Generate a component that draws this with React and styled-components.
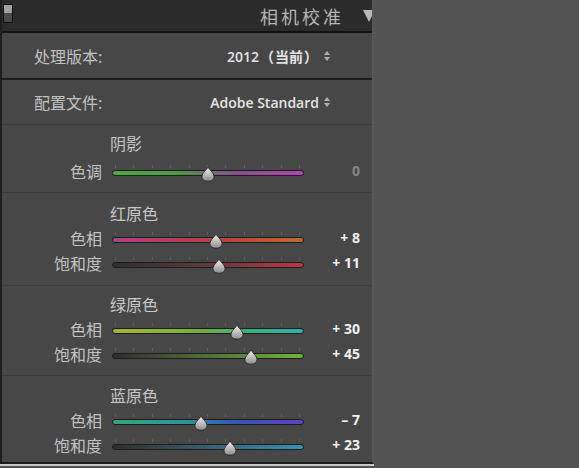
import React from 'react';
import styled, { createGlobalStyle } from 'styled-components';

const GlobalStyle = createGlobalStyle`
  html, body {
    margin: 0;
    padding: 0;
    background: #535353;
  }
  body {
    font-family: "Open Sans", "Noto Sans CJK SC", sans-serif;
  }
`;

const Page = styled.div`
  display: flex;
  height: 468px;
  width: 579px;
  overflow: hidden;
`;

const Panel = styled.div`
  width: 370px;
  height: 462px;
  background: #474747;
  border-left: 2px solid #1e1e1e;
  border-right: 2px solid #585858;
  border-bottom: 2px solid #1a1a1a;
  box-shadow: 0 2px 0 #c9c9c9;
  display: flex;
  flex-direction: column;
`;

const Filler = styled.div`
  flex: 1;
  background: #535353;
`;

const Header = styled.div`
  height: 31px;
  background: #2b2b2b;
  border-bottom: 2px solid #121212;
  display: flex;
  align-items: center;
  overflow: hidden;
  position: relative;
`;

const Switch = styled.div`
  width: 8px;
  height: 17px;
  margin-left: 1px;
  margin-top: -4px;
  border: 1px solid #111;
  background: linear-gradient(#a0a0a0 0 50%, #4a4a4a 50% 100%);
`;

const Title = styled.div`
  margin-left: auto;
  margin-right: 28px;
  font-family: "Noto Sans CJK SC", sans-serif;
  font-size: 18px;
  letter-spacing: 3px;
  color: #b4b4b4;
`;

const Caret = styled.div`
  position: absolute;
  right: -3px;
  top: 10px;
  width: 0;
  height: 0;
  border-left: 6px solid transparent;
  border-right: 6px solid transparent;
  border-top: 12px solid #b8b8b8;
`;

const InfoRow = styled.div`
  height: ${(p) => p.h}px;
  display: flex;
  align-items: center;
  padding: 0 42px 0 32px;
  border-bottom: ${(p) => p.line};
`;

const InfoLabel = styled.div`
  font-family: "Noto Sans CJK SC", sans-serif;
  font-size: 16px;
  color: #c2c2c2;
`;

const InfoValue = styled.div`
  margin-left: auto;
  display: flex;
  align-items: center;
  gap: 5px;
  font-family: "Open Sans", "Noto Sans CJK SC", sans-serif;
  font-weight: 600;
  font-size: 14px;
  color: #e4e4e4;
`;

const Paren = styled.span`
  margin: 0 1px;
`;

const Stepper = styled.span`
  display: flex;
  flex-direction: column;
  gap: 2px;
  &::before,
  &::after {
    content: '';
    width: 0;
    height: 0;
    border-left: 3px solid transparent;
    border-right: 3px solid transparent;
  }
  &::before {
    border-bottom: 4px solid #b0b0b0;
  }
  &::after {
    border-top: 4px solid #b0b0b0;
  }
`;

const Section = styled.div`
  padding: ${(p) => p.pad};
  border-bottom: ${(p) => (p.last ? 'none' : '1px solid #3c3c3c')};
`;

const Heading = styled.div`
  height: 24px;
  line-height: 24px;
  padding-left: 108px;
  font-family: "Noto Sans CJK SC", sans-serif;
  font-size: 16px;
  color: #c8c8c8;
`;

const Row = styled.div`
  height: 25px;
  display: grid;
  grid-template-columns: 100px 202px 56px;
  align-items: center;
`;

const Label = styled.div`
  text-align: right;
  font-family: "Noto Sans CJK SC", sans-serif;
  font-size: 16px;
  color: #c2c2c2;
`;

const TrackWrap = styled.div`
  position: relative;
  margin-left: 10px;
  height: 12px;
  display: flex;
  align-items: center;

  &::before {
    content: '';
    position: absolute;
    left: 3px;
    right: 3px;
    top: 0;
    height: 3px;
    background: repeating-linear-gradient(
      90deg,
      #5e5e5e 0 1px,
      transparent 1px 18.4px
    );
  }
`;

const Track = styled.div`
  width: 100%;
  height: 4px;
  border-radius: 3px;
  border: 1px solid #1c1c1c;
  background: ${(p) => p.bg};
  margin-top: 5px;
`;

const Thumb = styled.svg`
  position: absolute;
  top: 1px;
  width: 14px;
  height: 16px;
  transform: translateX(-7px);
`;

const Value = styled.div`
  text-align: right;
  font-family: "Open Sans", sans-serif;
  font-weight: 700;
  font-size: 14px;
  color: ${(p) => (p.dim ? '#858585' : '#f0f0f0')};
`;

function Slider({ label, value, bg }) {
  const pct = ((value + 100) / 200) * 100;
  const text =
    value === 0 ? '0' : value > 0 ? `+ ${value}` : `– ${Math.abs(value)}`;
  return (
    <Row>
      <Label>{label}</Label>
      <TrackWrap>
        <Track bg={bg} />
        <Thumb viewBox="0 0 14 16" style={{ left: `${pct}%` }}>
          <defs>
            <linearGradient id="th" x1="0" y1="0" x2="0" y2="1">
              <stop offset="0" stopColor="#f4f4f4" />
              <stop offset="1" stopColor="#8c8c8c" />
            </linearGradient>
          </defs>
          <path
            d="M7 0.8 C8 3.5 13 7 13 10.5 C13 13.6 10.5 15.2 7 15.2 C3.5 15.2 1 13.6 1 10.5 C1 7 6 3.5 7 0.8 Z"
            fill="url(#th)"
            stroke="#2a2a2a"
            strokeWidth="1"
          />
        </Thumb>
      </TrackWrap>
      <Value dim={value === 0}>{text}</Value>
    </Row>
  );
}

const sections = [
  {
    title: '阴影',
    pad: '6px 0 9px',
    first: true,
    rows: [
      {
        label: '色调',
        value: 0,
        bg: 'linear-gradient(90deg, #4bae3a 0%, #4a9c3c 33%, #6e6e6e 50%, #8a4c8c 66%, #b443b8 100%)',
      },
    ],
  },
  {
    title: '红原色',
    pad: '8px 0 10px',
    rows: [
      {
        label: '色相',
        value: 8,
        bg: 'linear-gradient(90deg, #b0408a 0%, #b0405a 35%, #b8443a 60%, #b86e30 100%)',
      },
      {
        label: '饱和度',
        value: 11,
        bg: 'linear-gradient(90deg, #2e2e2e 0%, #5a3a3a 45%, #c23444 100%)',
      },
    ],
  },
  {
    title: '绿原色',
    pad: '6px 0 9px',
    rows: [
      {
        label: '色相',
        value: 30,
        bg: 'linear-gradient(90deg, #a8b62e 0%, #74b03a 45%, #3ab07a 70%, #30b0a8 100%)',
      },
      {
        label: '饱和度',
        value: 45,
        bg: 'linear-gradient(90deg, #2e2e2e 0%, #4e6a3a 45%, #72b234 100%)',
      },
    ],
  },
  {
    title: '蓝原色',
    pad: '7px 0 4px',
    last: true,
    rows: [
      {
        label: '色相',
        value: -7,
        bg: 'linear-gradient(90deg, #2fa878 0%, #2e90a0 40%, #3454b8 65%, #6240c0 100%)',
      },
      {
        label: '饱和度',
        value: 23,
        bg: 'linear-gradient(90deg, #2e2e2e 0%, #3a5a6a 45%, #3494b8 100%)',
      },
    ],
  },
];

const FirstRowGap = styled.div`
  height: ${(p) => p.h}px;
`;

export default function App() {
  return (
    <>
      <GlobalStyle />
      <Page>
        <Panel>
          <Header>
            <Switch />
            <Title>相机校准</Title>
            <Caret />
          </Header>
          <InfoRow h={45} line="2px solid #1e1e1e">
            <InfoLabel>处理版本:</InfoLabel>
            <InfoValue>
              <span>
                2012<Paren>（</Paren>当前<Paren>）</Paren>
              </span>
              <Stepper />
            </InfoValue>
          </InfoRow>
          <InfoRow h={44} line="1px solid #3c3c3c">
            <InfoLabel>配置文件:</InfoLabel>
            <InfoValue>
              Adobe Standard
              <Stepper />
            </InfoValue>
          </InfoRow>
          {sections.map((s) => (
            <Section key={s.title} pad={s.pad} last={s.last}>
              <Heading>{s.title}</Heading>
              {s.first && <FirstRowGap h={3} />}
              {s.rows.map((r) => (
                <Slider key={r.label} {...r} />
              ))}
            </Section>
          ))}
        </Panel>
        <Filler />
      </Page>
    </>
  );
}
